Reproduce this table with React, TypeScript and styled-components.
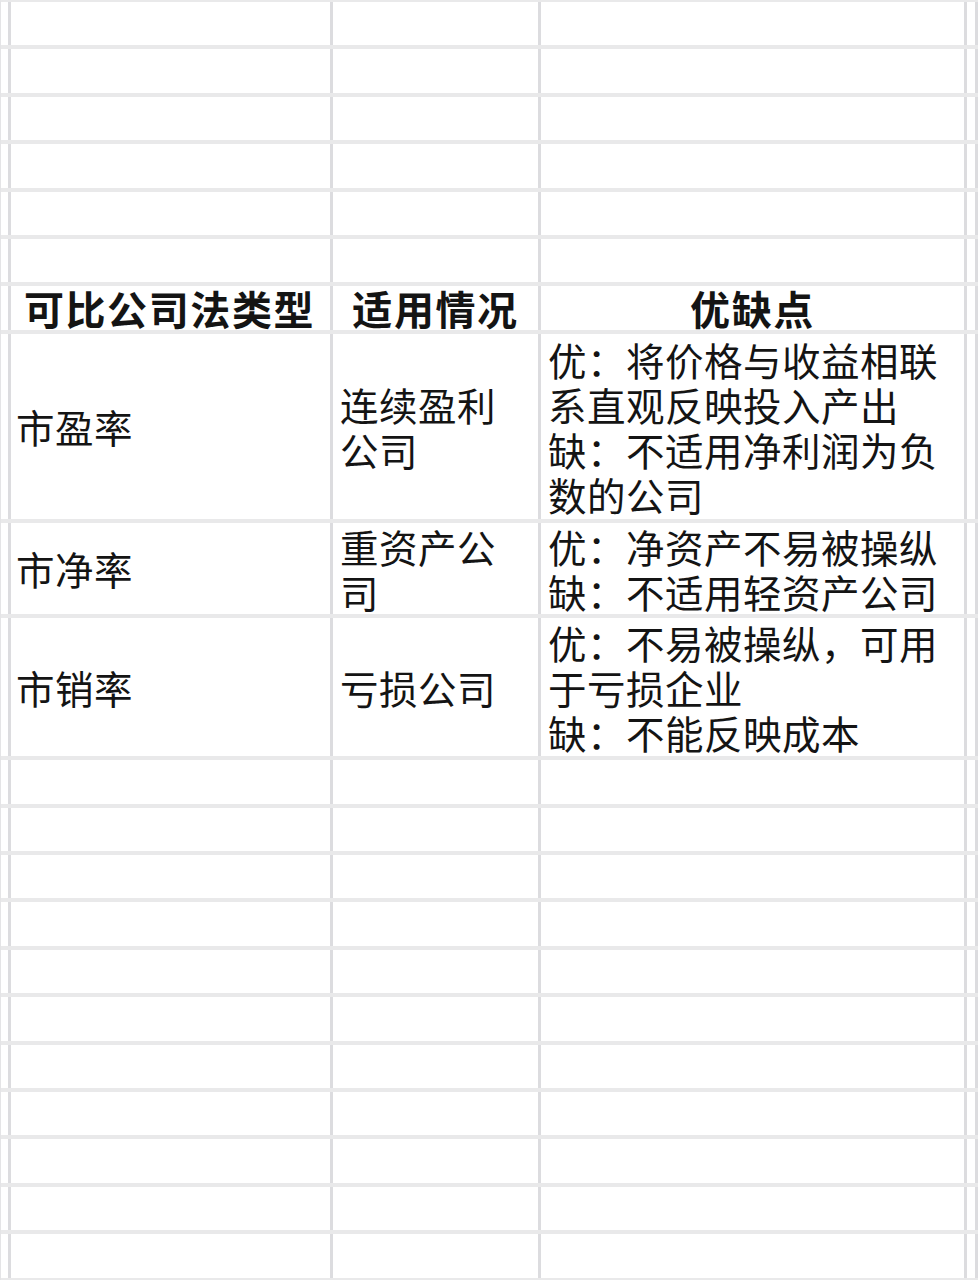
import * as React from 'react';
import styled, { createGlobalStyle } from 'styled-components';

const UNIT = 47.4;

const GlobalStyle = createGlobalStyle`
  html, body {
    margin: 0;
    padding: 0;
    background: #ffffff;
    overflow: hidden;
  }
  body {
    font-family: "Noto Sans CJK SC", "Noto Sans", sans-serif;
  }
`;

const Sheet = styled.div`
  width: 978px;
  height: 1280px;
  overflow: hidden;
  border-top: 2px solid #e9e9ea;
  border-left: 1px solid #e4e4e6;
  box-sizing: border-box;
`;

const Row = styled.div<{ $span: number }>`
  display: grid;
  grid-template-columns: 8px 324px 208px 426px 1fr;
  height: ${p => p.$span * UNIT}px;
  border-bottom: 4px solid #e9e9ea;
  box-sizing: border-box;
`;

const Cell = styled.div<{ $align?: 'left' | 'center'; $bold?: boolean }>`
  display: flex;
  flex-direction: column;
  justify-content: center;
  align-items: ${p => (p.$align === 'center' ? 'center' : 'flex-start')};
  padding-left: ${p => (p.$align === 'center' ? 0 : 7)}px;
  border-right: 3px solid #dcdcdf;
  box-sizing: border-box;
  overflow: hidden;
  color: #141414;
  font-size: ${p => (p.$bold ? 40 : 38.5)}px;
  font-weight: ${p => (p.$bold ? 700 : 400)};
  letter-spacing: ${p => (p.$bold ? 1.6 : 0.5)}px;
  line-height: ${p => (p.$bold ? 43 : 45)}px;
`;

const Line = styled.span`
  display: block;
  white-space: nowrap;
`;

type Entry = {
  span: number;
  cells?: string[][];
  header?: boolean;
};

const rows: Entry[] = [
  { span: 1 },
  { span: 1 },
  { span: 1 },
  { span: 1 },
  { span: 1 },
  { span: 1 },
  { span: 1, header: true, cells: [['可比公司法类型'], ['适用情况'], ['优缺点']] },
  {
    span: 4,
    cells: [
      ['市盈率'],
      ['连续盈利', '公司'],
      ['优：将价格与收益相联', '系直观反映投入产出', '缺：不适用净利润为负', '数的公司'],
    ],
  },
  {
    span: 2,
    cells: [
      ['市净率'],
      ['重资产公', '司'],
      ['优：净资产不易被操纵', '缺：不适用轻资产公司'],
    ],
  },
  {
    span: 3,
    cells: [
      ['市销率'],
      ['亏损公司'],
      ['优：不易被操纵，可用', '于亏损企业', '缺：不能反映成本'],
    ],
  },
  ...Array.from({ length: 11 }, () => ({ span: 1 })),
];

const App: React.FC = () => (
  <>
    <GlobalStyle />
    <Sheet>
      {rows.map((row, i) => (
        <Row key={i} $span={row.span}>
          <Cell />
          {[0, 1, 2].map(c => (
            <Cell key={c} $align={row.header ? 'center' : 'left'} $bold={row.header}>
              {row.cells?.[c].map((t, j) => (
                <Line key={j}>{t}</Line>
              ))}
            </Cell>
          ))}
          <Cell />
        </Row>
      ))}
    </Sheet>
  </>
);

export default App;
